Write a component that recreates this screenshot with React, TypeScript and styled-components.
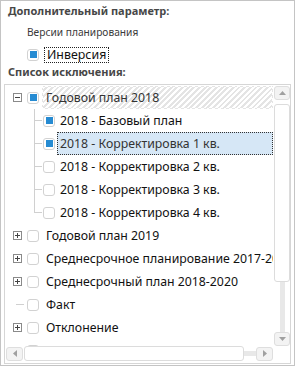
import styled, { createGlobalStyle, css } from "styled-components";

const GlobalStyle = createGlobalStyle`
  html, body {
    margin: 0;
    padding: 0;
    background: #ffffff;
  }
  body {
    font-family: "Noto Sans", "Liberation Sans", sans-serif;
  }
  * {
    box-sizing: border-box;
  }
`;

type Node = {
  label: string;
  level: 1 | 2;
  kind: "open" | "closed" | "leaf" | "child";
  checked?: boolean;
  last?: boolean;
  hatched?: boolean;
  selected?: boolean;
};

const nodes: Node[] = [
  { label: "Годовой план 2018", level: 1, kind: "open", checked: true, hatched: true },
  { label: "2018 - Базовый план", level: 2, kind: "child", checked: true },
  { label: "2018 - Корректировка 1 кв.", level: 2, kind: "child", checked: true, selected: true },
  { label: "2018 - Корректировка 2 кв.", level: 2, kind: "child" },
  { label: "2018 - Корректировка 3 кв.", level: 2, kind: "child" },
  { label: "2018 - Корректировка 4 кв.", level: 2, kind: "child", last: true },
  { label: "Годовой план 2019", level: 1, kind: "closed" },
  { label: "Среднесрочное планирование 2017-2021", level: 1, kind: "closed" },
  { label: "Среднесрочный план 2018-2020", level: 1, kind: "closed" },
  { label: "Факт", level: 1, kind: "leaf" },
  { label: "Отклонение", level: 1, kind: "closed" },
  { label: "Прогноз", level: 1, kind: "closed" },
];

const Frame = styled.div`
  width: 295px;
  height: 366px;
  border: 1px solid #c4c4c4;
  padding-top: 3px;
  display: flex;
  flex-direction: column;
  overflow: hidden;
`;

const GroupTitle = styled.div<{ $gap?: number }>`
  font-size: 11px;
  font-weight: 700;
  line-height: 13px;
  color: #474747;
  padding-left: 7px;
  margin-top: ${(p) => p.$gap ?? 0}px;
`;

const OptionCaption = styled.div`
  font-size: 10.2px;
  line-height: 13px;
  color: #3a3a3a;
  padding-left: 26px;
  margin-top: 9px;
`;

const CheckLine = styled.div`
  display: flex;
  align-items: center;
  gap: 6px;
  padding-left: 26px;
  margin-top: 7px;
  height: 17px;
`;

const CheckBox = styled.span<{ $checked?: boolean }>`
  flex: none;
  width: 12px;
  height: 12px;
  border: 1px solid #d2d2d2;
  border-radius: 3px;
  background: #ffffff;
  display: flex;
  align-items: center;
  justify-content: center;
  ${(p) =>
    p.$checked &&
    css`
      &::after {
        content: "";
        width: 7px;
        height: 7px;
        background: #268bd2;
      }
    `}
`;

const FocusLabel = styled.span`
  font-size: 12.4px;
  line-height: 14px;
  color: #111;
  padding: 0 2px;
  outline: 1px dotted #222;
`;

const TreeBox = styled.div`
  margin: 6px 3px 0 3px;
  height: 280px;
  border: 1px solid #d6d6d6;
  display: grid;
  grid-template-columns: 1fr 17px;
  grid-template-rows: 1fr 15px;
  padding: 1px 0 2px 0;
`;

const TreeViewport = styled.div`
  overflow: hidden;
  white-space: nowrap;
`;

const TreeRow = styled.div<{ $level: 1 | 2 }>`
  height: 23px;
  display: flex;
  align-items: center;
  padding-left: ${(p) => (p.$level === 1 ? 8 : 29)}px;
  gap: ${(p) => (p.$level === 1 ? 1 : 0)}px;
`;

const ExpanderSlot = styled.span`
  flex: none;
  width: 13px;
  height: 100%;
  display: flex;
  align-items: center;
`;

const ExpanderBox = styled.span<{ $open: boolean }>`
  position: relative;
  width: 9px;
  height: 9px;
  border: 1px solid #8a8a8a;
  background: #fff;
  &::before {
    content: "";
    position: absolute;
    left: 1px;
    top: 3px;
    width: 5px;
    height: 1px;
    background: #444;
  }
  ${(p) =>
    !p.$open &&
    css`
      &::after {
        content: "";
        position: absolute;
        left: 3px;
        top: 1px;
        width: 1px;
        height: 5px;
        background: #444;
      }
    `}
`;

const LeafStub = styled.span`
  margin-left: 3px;
  width: 8px;
  height: 1px;
  background: #d0d0d0;
`;

const Connector = styled.span<{ $last?: boolean }>`
  flex: none;
  position: relative;
  width: 9px;
  height: 100%;
  &::before {
    content: "";
    position: absolute;
    left: 0;
    top: 0;
    width: 1px;
    height: ${(p) => (p.$last ? "12px" : "100%")};
    background: #d0d0d0;
  }
  &::after {
    content: "";
    position: absolute;
    left: 0;
    top: 11px;
    width: 8px;
    height: 1px;
    background: #d0d0d0;
  }
`;

const NodeLabel = styled.span<{ $hatched?: boolean; $selected?: boolean; $level: 1 | 2 }>`
  flex: 1;
  height: 100%;
  display: flex;
  align-items: center;
  margin-left: 2px;
  padding: 0 ${(p) => (p.$level === 1 ? 3 : 2)}px;
  border: 1px solid transparent;
  font-size: 12.3px;
  color: #111;
  ${(p) =>
    p.$hatched &&
    css`
      color: #333;
      background: repeating-linear-gradient(
        135deg,
        #ffffff 0px,
        #ffffff 2px,
        #e4e4e4 2px,
        #e4e4e4 4px
      );
    `}
  ${(p) =>
    p.$selected &&
    css`
      color: #333;
      background: #d6e7f6;
      border: 1px dotted #333;
    `}
`;

const VScroll = styled.div`
  display: flex;
  flex-direction: column;
  align-items: center;
  padding-left: 1px;
`;

const HScroll = styled.div`
  display: flex;
  align-items: center;
  padding-left: 1px;
`;

const ScrollButton = styled.span<{ $wide?: boolean }>`
  flex: none;
  width: ${(p) => (p.$wide ? 17 : 16)}px;
  height: 14px;
  border: 1px solid #dedede;
  border-radius: 3px;
  background: #f3f3f3;
  display: flex;
  align-items: center;
  justify-content: center;
`;

const Thumb = styled.span<{ $dir: "v" | "h"; $size: number }>`
  flex: none;
  background: #ffffff;
  border: 1px solid #dcdcdc;
  border-radius: 3px;
  ${(p) =>
    p.$dir === "v"
      ? css`
          width: 16px;
          height: ${p.$size}px;
          margin-top: 4px;
        `
      : css`
          height: 15px;
          width: ${p.$size}px;
          margin-left: 1px;
        `}
`;

const Track = styled.span<{ $dir: "v" | "h" }>`
  flex: 1;
  background: #e8e8e8;
  ${(p) =>
    p.$dir === "v"
      ? css`
          width: 5px;
        `
      : css`
          height: 5px;
        `}
`;

const Arrow = ({ dir }: { dir: "up" | "down" | "left" | "right" }) => {
  const pts = {
    up: "0,4 3.5,0 7,4",
    down: "0,0 3.5,4 7,0",
    left: "4,0 0,3.5 4,7",
    right: "0,0 4,3.5 0,7",
  }[dir];
  const vertical = dir === "up" || dir === "down";
  return (
    <svg width={vertical ? 7 : 4} height={vertical ? 4 : 7} viewBox={vertical ? "0 0 7 4" : "0 0 4 7"}>
      <polygon points={pts} fill="#a0a0a0" />
    </svg>
  );
};

const Corner = styled.div``;

export default function App() {
  return (
    <>
      <GlobalStyle />
      <Frame>
        <GroupTitle>Дополнительный параметр:</GroupTitle>
        <OptionCaption>Версии планирования</OptionCaption>
        <CheckLine>
          <CheckBox $checked />
          <FocusLabel>Инверсия</FocusLabel>
        </CheckLine>
        <GroupTitle $gap={2}>Список исключения:</GroupTitle>
        <TreeBox>
          <TreeViewport>
            {nodes.map((n) => (
              <TreeRow key={n.label} $level={n.level}>
                {n.level === 1 ? (
                  <ExpanderSlot>
                    {n.kind === "leaf" ? <LeafStub /> : <ExpanderBox $open={n.kind === "open"} />}
                  </ExpanderSlot>
                ) : (
                  <Connector $last={n.last} />
                )}
                <CheckBox $checked={n.checked} />
                <NodeLabel $level={n.level} $hatched={n.hatched} $selected={n.selected}>
                  {n.label}
                </NodeLabel>
              </TreeRow>
            ))}
          </TreeViewport>
          <VScroll>
            <ScrollButton>
              <Arrow dir="up" />
            </ScrollButton>
            <Thumb $dir="v" $size={178} />
            <Track $dir="v" />
            <ScrollButton>
              <Arrow dir="down" />
            </ScrollButton>
          </VScroll>
          <HScroll>
            <ScrollButton $wide>
              <Arrow dir="left" />
            </ScrollButton>
            <Thumb $dir="h" $size={220} />
            <Track $dir="h" />
            <ScrollButton $wide>
              <Arrow dir="right" />
            </ScrollButton>
          </HScroll>
          <Corner />
        </TreeBox>
      </Frame>
    </>
  );
}
